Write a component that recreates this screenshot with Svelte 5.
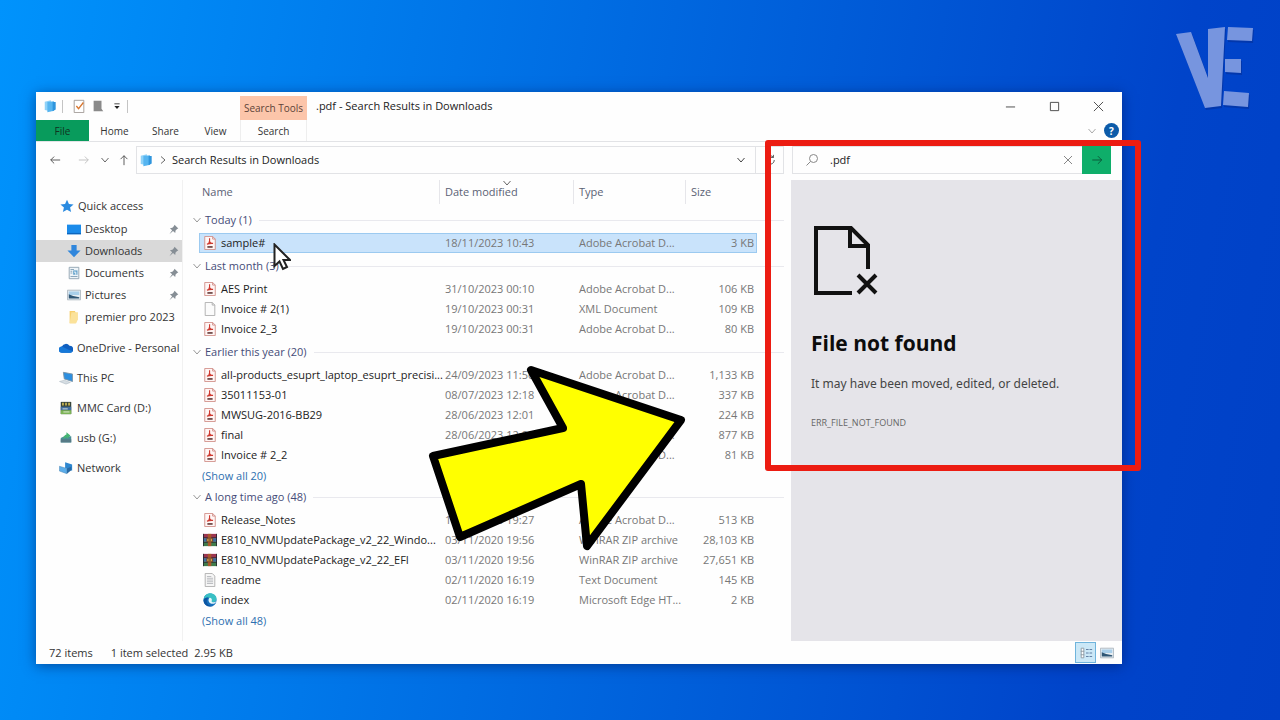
<script lang="ts">
type Entry = { name: string; date: string; type: string; size: string; icon: string };
type Group = { title: string; entries: Entry[]; more?: string };

const PDF = 'Adobe Acrobat D...';

let query = $state('.pdf');
let selected = $state('sample#');

const tabs = ['Home', 'Share', 'View'];

const quick = [
  { label: 'Desktop', icon: 'desktop', pinned: true },
  { label: 'Downloads', icon: 'downloads', pinned: true },
  { label: 'Documents', icon: 'documents', pinned: true },
  { label: 'Pictures', icon: 'pictures', pinned: true },
  { label: 'premier pro 2023', icon: 'folder', pinned: false },
];

const places = [
  { label: 'OneDrive - Personal', icon: 'onedrive' },
  { label: 'This PC', icon: 'pc' },
  { label: 'MMC Card (D:)', icon: 'card' },
  { label: 'usb (G:)', icon: 'usb' },
  { label: 'Network', icon: 'network' },
];

const groups: Group[] = [
  {
    title: 'Today (1)',
    entries: [{ name: 'sample#', date: '18/11/2023 10:43', type: PDF, size: '3 KB', icon: 'pdf' }],
  },
  {
    title: 'Last month (3)',
    entries: [
      { name: 'AES Print', date: '31/10/2023 00:10', type: PDF, size: '106 KB', icon: 'pdf' },
      { name: 'Invoice # 2(1)', date: '19/10/2023 00:31', type: 'XML Document', size: '109 KB', icon: 'blank' },
      { name: 'Invoice 2_3', date: '19/10/2023 00:31', type: PDF, size: '80 KB', icon: 'pdf' },
    ],
  },
  {
    title: 'Earlier this year (20)',
    more: '(Show all 20)',
    entries: [
      { name: 'all-products_esuprt_laptop_esuprt_precisi...', date: '24/09/2023 11:56', type: PDF, size: '1,133 KB', icon: 'pdf' },
      { name: '35011153-01', date: '08/07/2023 12:18', type: PDF, size: '337 KB', icon: 'pdf' },
      { name: 'MWSUG-2016-BB29', date: '28/06/2023 12:01', type: PDF, size: '224 KB', icon: 'pdf' },
      { name: 'final', date: '28/06/2023 12:00', type: PDF, size: '877 KB', icon: 'pdf' },
      { name: 'Invoice # 2_2', date: '21/06/2023 15:20', type: PDF, size: '81 KB', icon: 'pdf' },
    ],
  },
  {
    title: 'A long time ago (48)',
    more: '(Show all 48)',
    entries: [
      { name: 'Release_Notes', date: '17/11/2020 19:27', type: PDF, size: '513 KB', icon: 'pdf' },
      { name: 'E810_NVMUpdatePackage_v2_22_Windo...', date: '03/11/2020 19:56', type: 'WinRAR ZIP archive', size: '28,103 KB', icon: 'rar' },
      { name: 'E810_NVMUpdatePackage_v2_22_EFI', date: '03/11/2020 19:56', type: 'WinRAR ZIP archive', size: '27,651 KB', icon: 'rar' },
      { name: 'readme', date: '02/11/2020 16:19', type: 'Text Document', size: '145 KB', icon: 'text' },
      { name: 'index', date: '02/11/2020 16:19', type: 'Microsoft Edge HT...', size: '2 KB', icon: 'edge' },
    ],
  },
];
</script>

{#snippet icon(name: string)}
  <svg class="icon" viewBox="0 0 16 16" aria-hidden="true">
    {#if name === 'pdf'}
      <path d="M2 .5h9l3 3v12H2z" fill="#fff6f5" stroke="#cf8a84" />
      <path d="M11 .5v3h3" fill="none" stroke="#cf8a84" />
      <path d="M7.500 2.500v3.500M4.500 9.500c2-.5 3-2 3-4 0 2 1.500 3 4 3-2.500-.3-4.500 0-7 1z" fill="none" stroke="#cf3a30" stroke-width="1.300" />
      <path d="M5 12.500h6" stroke="#6e4644" stroke-width="2" />
    {:else if name === 'blank'}
      <path d="M2.500.5h8l3 3v12h-11z" fill="#fbfbfb" stroke="#a9a9a9" />
      <path d="M10.500.5v3h3" fill="none" stroke="#a9a9a9" />
    {:else if name === 'text'}
      <path d="M2.500.5h8l3 3v12h-11z" fill="#f6f6f6" stroke="#aaa" />
      <path d="M4.500 4h5M4.500 6h7M4.500 8h7M4.500 10h7M4.500 12h7" stroke="#b3b6ba" />
    {:else if name === 'rar'}
      <path d="M0 1h16v5H0z" fill="#9c3550" />
      <path d="M0 6h16v4H0z" fill="#3c6fa3" />
      <path d="M0 10h16v5H0z" fill="#3f7d4b" />
      <path d="M0 5.500h16M0 10.500h16M.5 1v14M15.500 1v14" stroke="#23262f" />
      <path d="M5.500 1h4v14h-4z" fill="#a8572c" />
      <path d="M4.500 6h6.500v4H4.500z" fill="#e6c25c" stroke="#6b3320" />
      <path d="M6 8h3.500" stroke="#6b3320" stroke-width="1.500" />
    {:else if name === 'edge'}
      <circle cx="8" cy="8" r="7.500" fill="#1770bd" />
      <path d="M.7 7C1.500 2.800 4.800.4 8.200.4c4 0 7.300 2.800 7.300 6.200 0 2.600-2 4-4.200 4-1.700 0-2.600-.6-2.200-1.300.5-.9.400-3.600-2.600-3.800C4 5.300 1.600 6 .7 7z" fill="#39bfc4" />
      <path d="M8 5.500c2 .3 2.600 2.300 1.900 3.500-.5.900 1.200 1.800 3 1.500 1-.2 1.800-.7 2.300-1.200-.8 2-2.200 3-3.900 3.100C8 12.600 5.800 10 6.400 7.500 6.600 6.500 7.200 5.700 8 5.500z" fill="#e8f8fb" />
      <path d="M.6 8C1.400 5.800 4 4.700 6.500 5.400 4.300 6.500 3.700 9.800 5 12c1.300 2.300 4 3.400 6.800 2.600C6.500 17 .4 13.700.6 8z" fill="#0c55a2" />
    {:else if name === 'desktop'}
      <path d="M0 3h16v11H0z" fill="#1b8bea" />
      <path d="M0 12.500h16V14H0z" fill="#0d66bd" />
    {:else if name === 'downloads'}
      <path d="M5 1h6v6.500h4.500L8 15 .5 7.500H5z" fill="#2f86dc" />
    {:else if name === 'documents'}
      <path d="M2.500 1.500h11v13h-11z" fill="#eef4f8" stroke="#8da0ae" />
      <path d="M4 4h4M4 6h2M4 8h2M4 12h8" stroke="#7f9db4" />
      <path d="M7 5h5v5H7z" fill="#6ba7ce" />
      <path d="M8 7h2v3" fill="none" stroke="#fff" />
    {:else if name === 'pictures'}
      <path d="M.5 2.500h15v11H.5z" fill="#e6edf2" stroke="#aab6be" />
      <path d="M2 4h12v4H2z" fill="#a9cfea" />
      <path d="M2 12V7l5 2 7 1.500V12z" fill="#2f5675" />
    {:else if name === 'folder'}
      <path d="M3 1h6l1 2v12H3z" fill="#f7cf6d" />
      <path d="M5 2.500h7.500v8L10.500 15H3z" fill="#fbe29a" />
    {:else if name === 'onedrive'}
      <path d="M3.500 13.500A3.500 3.500 0 0 1 3.300 6.200 5 5 0 0 1 12 5.500 3.900 3.900 0 0 1 12.500 13.500z" fill="#0f5fc0" />
      <path d="M3.300 6.200 11 10l4.700 1.500c-.6 1.300-1.600 2-3.200 2h-9A3.500 3.500 0 0 1 3.300 6.200z" fill="#1678d8" />
    {:else if name === 'pc'}
      <path d="m5 1.500 10.500 2V12L6 9z" fill="#2c8fe0" stroke="#7d93a5" />
      <path d="m.5 12 5.500-1.500 7 2.500-5 2z" fill="#d5dde3" stroke="#a3b0ba" stroke-width=".5" />
    {:else if name === 'card'}
      <path d="M2 1h12v14H2z" fill="#37443a" />
      <path d="M3.500 2h2v3h-2zM7 2h2v3H7zM10.500 2h2v3h-2z" fill="#c8b554" />
      <path d="M2 6.500h12v4H2z" fill="#416d9e" />
      <path d="M2 10.500h12V15H2z" fill="#7cb457" />
      <path d="M4 9h6M5 12.500h7" stroke="#e8eee0" />
    {:else if name === 'usb'}
      <path d="m2 8 4-2h8v7H2z" fill="#4b8f96" />
      <path d="M2 9.500h12V13H2z" fill="#567a86" />
      <path d="M5 9.500C5 6 6.500 4.500 8.500 4V1.500L13 5 9 9V7C7.500 7.300 6 8 5 9.500z" fill="#46b573" />
    {:else if name === 'network'}
      <path d="m7 1.500 8 2.500v7L7 8z" fill="#2d86cf" />
      <path d="m.5 6 8.500 2.500V14.500L.5 11.500z" fill="#5badea" stroke="#417fae" stroke-width=".5" />
      <path d="m9 14.500 5-4v-4L9 8.500z" fill="#2769a4" />
    {:else if name === 'library'}
      <path d="m2 3 7-1.500V14L2 12.500z" fill="#8fd2f8" />
      <path d="m5 3.500 7.500-1V13.500L5 15z" fill="#56b5f0" />
      <path d="M11 3.500h3.500V12L11 14z" fill="#2f95dd" />
    {:else if name === 'star'}
      <path d="m8 .8 2.200 4.900 5.300.5-4 3.500 1.200 5.200L8 12.200l-4.700 2.700 1.200-5.200-4-3.500 5.300-.5z" fill="#2b8be0" />
    {:else if name === 'pin'}
      <path d="m9.500 1 5.500 5.500-1.800.8-2.200 2.300-.5 3.600-3.200-3L2 15l4-6-3.200-3 3.600-.5L8.700 3z" fill="#868e95" />
    {/if}
  </svg>
{/snippet}

{#snippet chevron()}
  <svg class="chevron" viewBox="0 0 10 10" aria-hidden="true"><path d="m1.500 3 3.500 4 3.500-4" /></svg>
{/snippet}

<div class="desktop">
  <svg class="logo" viewBox="0 0 80 86" role="img" aria-label="VE">
    <g fill="#04309a" opacity=".6" transform="translate(1 2)">
      <path d="M1 10 16 8l17 46V5l17-2-4 79-16 2z" />
      <path d="M53 3l25 1-1 13-25-1zM50 35h16v14l-16-1zM49 67l25 2-1 14-25-2z" />
    </g>
    <g fill="#7795df">
      <path d="M1 10 16 8l17 46V5l17-2-4 79-16 2z" />
      <path d="M53 3l25 1-1 13-25-1zM50 35h16v14l-16-1zM49 67l25 2-1 14-25-2z" />
    </g>
  </svg>

  <main class="window">
    <header>
      <div class="titlebar">
        <div class="quickbar">
          {@render icon('library')}
          <i></i>
          <button aria-label="Properties">
            <svg class="icon" viewBox="0 0 16 16"><path d="M2.500 1.500h11v14h-11z" fill="#fff" stroke="#9d9691" /><path d="m5 8 2.500 3L13 4" fill="none" stroke="#d9762e" stroke-width="1.500" /></svg>
          </button>
          <button aria-label="New folder">
            <svg class="icon" viewBox="0 0 16 16"><path d="M3 2h9v9l2 3H3z" fill="#8a8a8a" /></svg>
          </button>
          <button aria-label="Customise toolbar">
            <svg class="icon" viewBox="0 0 16 16"><path d="M5 5.500h6" stroke="#333" /><path d="M5 8h6l-3 3.500z" fill="#222" /></svg>
          </button>
          <i></i>
        </div>
        <div class="tools">Search Tools</div>
        <h1>.pdf - Search Results in Downloads</h1>
        <div class="controls">
          <button aria-label="Minimise"><svg viewBox="0 0 12 12"><path d="M1 6.500h10" /></svg></button>
          <button aria-label="Maximise"><svg viewBox="0 0 12 12"><path d="M1.500 1.500h9v9h-9z" /></svg></button>
          <button aria-label="Close"><svg viewBox="0 0 12 12"><path d="m1 1 10 10M11 1 1 11" /></svg></button>
        </div>
      </div>
      <nav class="ribbon">
        <button class="file">File</button>
        {#each tabs as tab}
          <button>{tab}</button>
        {/each}
        <button class="search_tab">Search</button>
        <button class="expand" aria-label="Expand the ribbon">{@render chevron()}</button>
        <button class="help" aria-label="Help">?</button>
      </nav>
    </header>

    <div class="address">
      <div class="nav_btns">
        <button aria-label="Back"><svg viewBox="0 0 14 14"><path d="M13 7H2m4-4L2 7l4 4" /></svg></button>
        <button class="dim" aria-label="Forward"><svg viewBox="0 0 14 14"><path d="M1 7h11M8 3l4 4-4 4" /></svg></button>
        <button class="recent" aria-label="Recent locations">{@render chevron()}</button>
        <button class="up" aria-label="Up"><svg viewBox="0 0 14 14"><path d="M7 13V2M3 6l4-4 4 4" /></svg></button>
      </div>
      <div class="path">
        {@render icon('library')}
        <svg class="chevron side" viewBox="0 0 10 10" aria-hidden="true"><path d="m3 1.500 4 3.500-4 3.500" /></svg>
        <span class="grow">Search Results in Downloads</span>
        <button aria-label="Previous locations">{@render chevron()}</button>
        <button class="refresh" aria-label="Refresh"><svg viewBox="0 0 14 14"><path d="M11 4a5 5 0 1 0 1 3M11 1v3H8" /></svg></button>
      </div>
      <form class="search" onsubmit={(e) => e.preventDefault()}>
        <svg class="lens" viewBox="0 0 14 14" aria-hidden="true"><circle cx="8.500" cy="5.500" r="4" /><path d="M5.500 8.500 1.500 12.500" /></svg>
        <input type="text" aria-label="Search Downloads" bind:value={query} />
        <button type="button" class="clear" aria-label="Clear search" onclick={() => (query = '')}>
          <svg viewBox="0 0 12 12"><path d="m2 2 8 8M10 2l-8 8" /></svg>
        </button>
        <button class="go" aria-label="Search"><svg viewBox="0 0 14 14"><path d="M1.500 7h11M8 2.500 12.500 7 8 11.500" /></svg></button>
      </form>
    </div>

    <div class="body">
      <nav class="sidebar" aria-label="Folders">
        <a class="root" href="#quick">{@render icon('star')}<span>Quick access</span></a>
        {#each quick as item}
          <a href="#{item.icon}" class="sub" class:active={item.label === 'Downloads'}>
            {@render icon(item.icon)}<span>{item.label}</span>
            {#if item.pinned}<span class="pin">{@render icon('pin')}</span>{/if}
          </a>
        {/each}
        <div class="places">
          {#each places as item}
            <a href="#{item.icon}">{@render icon(item.icon)}<span>{item.label}</span></a>
          {/each}
        </div>
      </nav>

      <div class="files">
        <table>
          <thead>
            <tr>
              <th>Name</th>
              <th>Date modified<span class="sort">{@render chevron()}</span></th>
              <th>Type</th>
              <th>Size</th>
            </tr>
          </thead>
          {#each groups as group}
            <tbody>
              <tr class="group"><th colspan="4">{@render chevron()}<span>{group.title}</span></th></tr>
              {#each group.entries as entry}
                <tr class="entry" class:selected={entry.name === selected} onclick={() => (selected = entry.name)}>
                  <td class="name">{@render icon(entry.icon)}<span>{entry.name}</span></td>
                  <td>{entry.date}</td>
                  <td>{entry.type}</td>
                  <td class="size">{entry.size}</td>
                </tr>
              {/each}
              {#if group.more}
                <tr class="more"><td colspan="4"><a href="#all">{group.more}</a></td></tr>
              {/if}
            </tbody>
          {/each}
        </table>
      </div>

      <section class="preview">
        <svg viewBox="0 0 64 70" aria-hidden="true">
          <path d="M38 67H2V2h35l17 17v24M36 2v18h18" />
          <path d="m44 49 18 18m0-18L44 67" />
        </svg>
        <h2>File not found</h2>
        <p>It may have been moved, edited, or deleted.</p>
        <small>ERR_FILE_NOT_FOUND</small>
      </section>
    </div>

    <footer>
      <span>72 items</span>
      <span class="count">1 item selected</span>
      <span>2.95 KB</span>
      <span class="grow"></span>
      <button class="on" aria-label="Details view">
        <svg class="icon" viewBox="0 0 16 16"><path d="M2.500 2.500h3v11h-3zM2 6h4M2 10h4" fill="#fff" stroke="#8a97a0" /><path d="M8 4h3m1 0h3M8 8h3m1 0h3M8 12h3m1 0h3" stroke="#56749a" /></svg>
      </button>
      <button aria-label="Thumbnail view">{@render icon('pictures')}</button>
    </footer>
  </main>

  <svg class="cursor" viewBox="0 0 18 28" aria-hidden="true">
    <path d="M1.500 1.500v21.500l5-4.500 3.500 7.500 4-2-3.500-7h6.500z" />
  </svg>
  <svg class="arrow" viewBox="0 0 260 190" aria-hidden="true">
    <path d="M103 6 253 56 159 182 153 120 32 173 5 92 135 64z" />
  </svg>
  <div class="highlight"></div>
</div>

<style>
:global(body) {
  margin: 0;
}
.desktop {
  --line: #e2e3e6;
  position: relative;
  box-sizing: border-box;
  display: flex;
  min-height: 100vh;
  padding: 92px 158px 56px 36px;
  overflow: hidden;
  font-family: "Open Sans", "Noto Sans", sans-serif;
  font-size: 11px;
  line-height: 16px;
  color: #333;
  background: linear-gradient(100deg, #0093fc 0%, #0078ea 30%, #005cd8 60%, #0044ca 85%, #0040c6 100%);
}
button {
  display: flex;
  align-items: center;
  justify-content: center;
  padding: 0;
  border: 0;
  background: none;
  font: inherit;
  color: inherit;
}
a {
  color: inherit;
  text-decoration: none;
}
svg {
  display: block;
  flex: none;
}
button svg {
  width: 12px;
  height: 12px;
  fill: none;
  stroke: #444;
}
.icon {
  width: 14px;
  height: 14px;
  stroke: none;
}
.chevron {
  width: 10px;
  height: 10px;
  fill: none;
  stroke: #666;
}
.grow {
  flex: 1;
}

.window {
  display: flex;
  flex-direction: column;
  flex: 1;
  min-width: 0;
  background: #fefefe;
  box-shadow: 0 2px 12px rgba(0, 20, 80, 0.5);
}
header {
  border-bottom: 1px solid var(--line);
}
.titlebar {
  display: flex;
  height: 28px;
}
.quickbar {
  display: flex;
  align-items: center;
  box-sizing: border-box;
  width: 204px;
  gap: 5px;
  padding-left: 7px;
}
.quickbar i {
  width: 1px;
  height: 13px;
  margin-right: 4px;
  background: #c4c4c4;
}
.quickbar i:last-child {
  margin-left: -2px;
}
.tools {
  width: 67px;
  margin-top: 4px;
  line-height: 24px;
  font-size: 10px;
  text-align: center;
  white-space: nowrap;
  color: #5c4238;
  background: #fcc5aa;
}
h1 {
  flex: 1;
  margin: 0 0 0 9px;
  font-size: 11px;
  font-weight: 400;
  line-height: 28px;
  color: #222;
}
.controls {
  display: flex;
  margin-right: 2px;
}
.controls button {
  width: 44px;
}
.controls svg {
  width: 11px;
  height: 11px;
}
.ribbon {
  display: flex;
  height: 21px;
  font-size: 10px;
}
.ribbon button {
  width: 51px;
}
.ribbon .file {
  width: 53px;
  color: #10331f;
  background: #089b5c;
}
.ribbon .search_tab {
  box-sizing: border-box;
  width: 67px;
  border: 1px solid #eee;
  border-width: 0 1px;
  margin-right: auto;
}
.ribbon .file + button + button + button {
  width: 49px;
}
.ribbon .expand {
  width: 20px;
}
.ribbon .expand .chevron {
  stroke: #aaa;
}
.ribbon .help {
  width: 15px;
  height: 15px;
  margin: 3px 3px 0 2px;
  border-radius: 50%;
  font-weight: 700;
  color: #fff;
  background: #0c5ba9;
}

.address {
  display: flex;
  align-items: center;
  padding: 4px 11px 6px 0;
}
.nav_btns {
  display: flex;
  width: 100px;
  padding-left: 11px;
  box-sizing: border-box;
}
.nav_btns button {
  width: 16px;
  margin-right: 13px;
}
.nav_btns .dim {
  margin-right: 4px;
  opacity: 0.35;
}
.nav_btns .recent {
  width: 18px;
  margin-right: 2px;
}
.nav_btns .up {
  margin-right: 0;
}
.path,
.search {
  box-sizing: border-box;
  display: flex;
  align-items: center;
  height: 28px;
  border: 1px solid var(--line);
}
.path {
  flex: 1;
  padding-left: 2px;
  color: #222;
}
.path .side {
  margin: 0 4px 0 5px;
}
.path button {
  width: 28px;
}
.path button .chevron {
  stroke: #444;
}
.path .refresh {
  height: 26px;
  border-left: 1px solid var(--line);
}
.search {
  width: 319px;
  margin-left: 8px;
  border-right: 0;
}
.search .lens {
  width: 14px;
  height: 14px;
  margin: 0 11px 0 12px;
  fill: none;
  stroke: #888;
}
.search input {
  flex: 1;
  min-width: 0;
  padding: 0;
  border: 0;
  outline: 0;
  background: none;
  font: inherit;
  color: #222;
}
.search .clear {
  width: 29px;
}
.search .clear svg {
  stroke: #888;
}
.search .go {
  width: 29px;
  height: 28px;
  background: #0fae6a;
}
.search .go svg {
  stroke: #0b5033;
}

.body {
  display: flex;
  flex: 1;
}
.sidebar {
  width: 146px;
  padding-top: 15px;
  border-right: 1px solid #f1f1f1;
  white-space: nowrap;
}
.sidebar a {
  display: flex;
  align-items: center;
  gap: 4px;
  height: 22px;
}
.sidebar .root {
  margin-bottom: 1px;
  padding-left: 24px;
}
.sidebar .sub {
  padding: 0 0 0 31px;
}
.sidebar .active {
  background: #d9d9d9;
}
.pin {
  margin-left: auto;
  padding-right: 3px;
}
.pin .icon {
  width: 11px;
  height: 11px;
}
.places {
  padding-top: 5px;
}
.places a {
  height: 30px;
  padding-left: 23px;
}

.files {
  flex: 1;
  min-width: 0;
  padding: 0 7px;
}
table,
thead,
tbody {
  display: block;
}
thead tr,
.entry {
  display: grid;
  grid-template-columns: 1fr 134px 112px 72px;
  margin: 0 27px 0 9px;
}
thead tr {
  height: 27px;
  margin-bottom: 3px;
  color: #5b6275;
}
th {
  padding: 0;
  font-weight: 400;
  text-align: left;
}
thead th {
  position: relative;
  height: 24px;
  padding-left: 6px;
  line-height: 24px;
}
thead th + th {
  border-left: 1px solid #e6e6ea;
  padding-left: 5px;
}
thead th:first-child {
  padding-left: 3px;
}
.sort {
  position: absolute;
  top: -2px;
  left: 62px;
}
.group,
.more {
  display: block;
}
.group {
  margin: 3px 0;
}
.group th {
  display: flex;
  align-items: center;
  gap: 3px;
  height: 20px;
  padding-left: 2px;
  color: #454c78;
}
.group th::after {
  content: "";
  flex: 1;
  height: 1px;
  margin-left: 4px;
  background: #e9e9ee;
}
.group .chevron {
  stroke: #999;
}
.entry {
  height: 20px;
  color: #777;
}
.entry td {
  padding: 0 0 0 6px;
  line-height: 20px;
  white-space: nowrap;
}
.entry .name {
  display: flex;
  align-items: center;
  gap: 4px;
  min-width: 0;
  padding-left: 4px;
  color: #222;
}
.entry .size {
  padding-right: 3px;
  text-align: right;
}
.selected {
  background: #c9e3fb;
  box-shadow: inset 0 0 0 1px #9ccaf0;
}
.more td {
  display: block;
  padding: 0 0 0 12px;
  line-height: 22px;
  color: #2d70b0;
}
tbody:last-child {
  margin-top: -3px;
}

.preview {
  box-sizing: border-box;
  width: 331px;
  padding: 46px 20px;
  background: #e5e4e9;
}
.preview svg {
  width: 64px;
  height: 70px;
  margin-left: 3px;
  fill: none;
  stroke: #111;
  stroke-width: 4px;
}
.preview h2 {
  margin: 31px 0 17px;
  font-size: 21px;
  font-weight: 700;
  line-height: 32px;
  color: #0c0c0c;
}
.preview p {
  margin: 0 0 23px;
  font-family: "Noto Sans", sans-serif;
  font-size: 12px;
  white-space: nowrap;
  color: #444;
}
.preview small {
  display: block;
  font-size: 9px;
  color: #666;
}

footer {
  display: flex;
  align-items: center;
  height: 23px;
  padding: 0 5px 0 13px;
}
.count {
  margin: 0 6px 0 18px;
}
footer button {
  width: 21px;
  height: 21px;
}
footer .on {
  box-sizing: border-box;
  border: 1px solid #6fb4dc;
  background: #cbe8f7;
}

/* things lying over the window */
.logo {
  position: absolute;
  top: 24px;
  right: 25px;
  width: 80px;
  height: 86px;
}
.cursor {
  position: absolute;
  top: 243px;
  left: 273px;
  width: 18px;
  height: 28px;
  fill: #fff;
  stroke: #222;
  stroke-width: 2px;
}
.arrow {
  position: absolute;
  top: 364px;
  left: 428px;
  width: 260px;
  height: 190px;
  fill: #ff0;
  stroke: #000;
  stroke-width: 8px;
  stroke-linejoin: round;
}
.highlight {
  position: absolute;
  top: 140px;
  right: 139px;
  box-sizing: border-box;
  width: 376px;
  height: 331px;
  border: 6px solid #ec1c12;
  border-radius: 3px;
  pointer-events: none;
}
</style>
